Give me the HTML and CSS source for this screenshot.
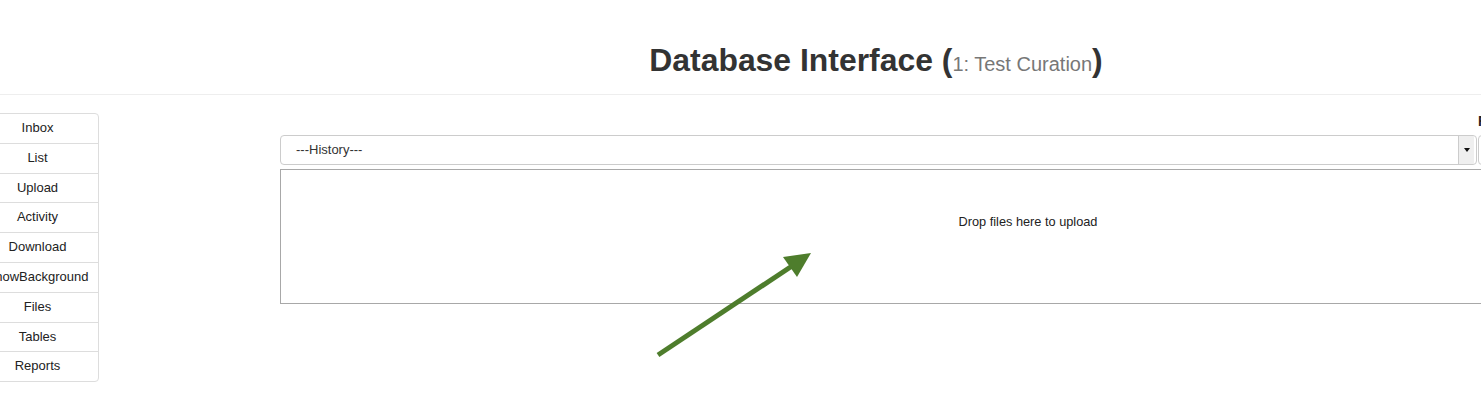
FILE: index.html
```html
<!DOCTYPE html>
<html>
<head>
<meta charset="utf-8">
<link rel="stylesheet" href="styles.css">
</head>
<body>
<header class="page-header">
  <h1 class="title">Database Interface (<small>1: Test Curation</small>)</h1>
</header>
<div class="main">
  <nav class="sidebar">
    <a class="item">Inbox</a>
    <a class="item">List</a>
    <a class="item">Upload</a>
    <a class="item">Activity</a>
    <a class="item">Download</a>
    <a class="item">ShowBackground</a>
    <a class="item">Files</a>
    <a class="item">Tables</a>
    <a class="item">Reports</a>
  </nav>
  <section class="content">
    <div class="row">
      <div class="col-select">
        <div class="select">
          <span class="select-text">---History---</span>
          <span class="caret-btn"><span class="caret"></span></span>
        </div>
      </div>
      <div class="col-f">
        <label class="flabel">F</label>
        <div class="fctrl"></div>
      </div>
    </div>
    <div class="dropzone">Drop files here to upload</div>
  </section>
</div>
<svg class="arrow" width="180" height="120" viewBox="0 0 180 120">
  <line x1="8" y1="111" x2="145" y2="20" stroke="#4e7d2c" stroke-width="5"/>
  <polygon points="133,13 161,9 147,33" fill="#4e7d2c"/>
</svg>
</body>
</html>
```
FILE: styles.css
```css
html, body {
  margin: 0;
  padding: 0;
  background: #fff;
  overflow: hidden;
  width: 1481px;
  height: 416px;
  font-family: "Liberation Sans", Arial, sans-serif;
  color: #333;
}
.page-header {
  border-bottom: 1px solid #eee;
  padding: 40px 0 10px 271px;
  text-align: center;
}
.title {
  margin: 0;
  font-size: 31.9px;
  font-weight: bold;
  line-height: 40px;
  color: #333;
}
.title small {
  font-size: 20px;
  font-weight: normal;
  color: #777;
}
.main {
  display: flex;
  align-items: flex-start;
  padding-top: 18px;
}
.sidebar {
  display: flex;
  flex-direction: column;
  width: 121px;
  margin-left: -24px;
  border: 1px solid #ddd;
  border-radius: 4px;
  flex-shrink: 0;
}
.sidebar .item {
  display: block;
  height: 28.8px;
  line-height: 28.8px;
  text-align: center;
  font-size: 13px;
  color: #222;
  border-top: 1px solid #ddd;
}
.sidebar .item:first-child {
  border-top: none;
}
.content {
  margin-left: 181px;
  flex-shrink: 0;
}
.row {
  display: flex;
  align-items: flex-end;
  margin-top: -2px;
}
.col-select {
  width: 1197px;
}
.select {
  display: flex;
  align-items: stretch;
  height: 28px;
  border: 1px solid #ccc;
  border-radius: 4px;
}
.select-text {
  flex: 1;
  padding-left: 15px;
  font-size: 13px;
  line-height: 28px;
  color: #333;
}
.caret-btn {
  width: 15px;
  margin-right: 2px;
  background: #efefef;
  border-left: 1px solid #ccc;
  display: flex;
  align-items: center;
  justify-content: center;
}
.caret {
  width: 0;
  height: 0;
  border-left: 3px solid transparent;
  border-right: 3px solid transparent;
  border-top: 4px solid #111;
}
.col-f {
  display: flex;
  flex-direction: column;
  margin-left: 1px;
  width: 60px;
}
.flabel {
  font-size: 14px;
  font-weight: bold;
  line-height: 20px;
  margin-bottom: 4px;
  color: #222;
}
.fctrl {
  height: 28px;
  border: 1px solid #ccc;
  border-radius: 4px;
}
.dropzone {
  margin-top: 4px;
  width: 1494px;
  height: 89px;
  padding-top: 44px;
  border: 1px solid #a8a8a8;
  text-align: center;
  font-size: 12.75px;
  line-height: 16px;
  color: #222;
}
.arrow {
  position: absolute;
  left: 650px;
  top: 244px;
}
```
